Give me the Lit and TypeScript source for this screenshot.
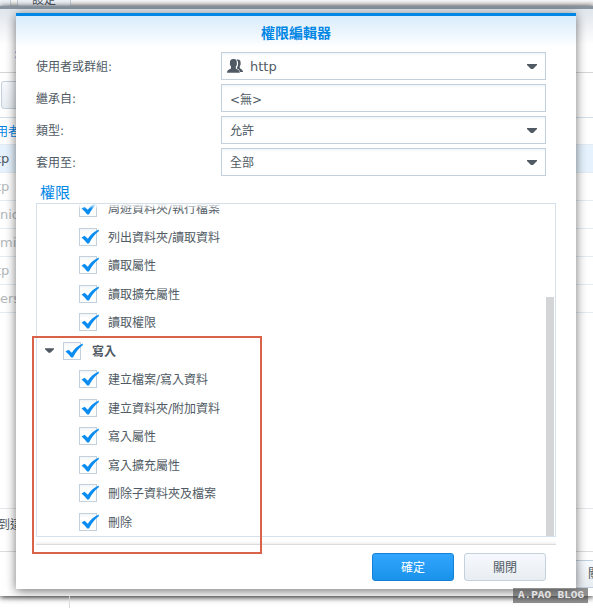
import { LitElement, html, css, svg, nothing } from "lit";
import { customElement, property } from "lit/decorators.js";

const FONT = css`"DejaVu Sans", "Noto Sans CJK TC", sans-serif`;

interface Permission {
  name: string;
  parent?: boolean;
}

const PERMISSIONS: Permission[] = [
  { name: "周遊資料夾/執行檔案" },
  { name: "列出資料夾/讀取資料" },
  { name: "讀取屬性" },
  { name: "讀取擴充屬性" },
  { name: "讀取權限" },
  { name: "寫入", parent: true },
  { name: "建立檔案/寫入資料" },
  { name: "建立資料夾/附加資料" },
  { name: "寫入屬性" },
  { name: "寫入擴充屬性" },
  { name: "刪除子資料夾及檔案" },
  { name: "刪除" },
];

const arrow = (cls: string) => html`<svg class=${cls} viewBox="0 0 10 5" aria-hidden="true">
  ${svg`<path d="M0 0H10V1L6 5H4L0 1Z" fill="#505a64"/>`}
</svg>`;

@customElement("permission-row")
class PermissionRow extends LitElement {
  @property() name = "";
  @property({ type: Boolean, reflect: true }) parent = false;

  static styles = css`
    :host { display: flex; align-items: center; padding-left: 42px; }
    :host([parent]) { padding-left: 8px; font-weight: bold; }
    .toggle { display: flex; width: 18px; height: 18px; padding: 0; border: 0; background: none; align-items: center; }
    .caret { width: 9px; height: 5px; }
    .item { display: flex; align-items: center; gap: 11px; }
    .box { display: grid; width: 18px; height: 18px; }
    .box > * { grid-area: 1 / 1; }
    .input { appearance: none; box-sizing: border-box; width: 18px; height: 18px; margin: 0; border: 1px solid #c3d0dd; background: linear-gradient(#f1f4f7, #fff 4px); }
    .tick { width: 18px; height: 18px; overflow: visible; pointer-events: none; }
    .name { line-height: 18px; padding-top: 2px; white-space: nowrap; }
  `;

  render() {
    return html`
      ${this.parent ? html`<button class="toggle" aria-label="收合">${arrow("caret")}</button>` : nothing}
      <label class="item">
        <span class="box">
          <input class="input" type="checkbox" checked />
          <svg class="tick" viewBox="0 0 18 18" aria-hidden="true">
            <path d="M2.5 9.4 5.6 7.8 8.8 10.8C11.6 6.8 15 3.4 19.8 1.6V3.2C16 6 13 9.8 10 15.4H8.2C6.4 13 4.6 11 2.5 9.4Z" fill="#0a8cf0" />
          </svg>
        </span>
        <span class="name">${this.name}</span>
      </label>
    `;
  }
}

@customElement("permission-dialog")
class PermissionDialog extends LitElement {
  static styles = css`
    :host { display: block; }
    .dialog { border-top: 3px solid #0086e5; background: #fff; box-shadow: 0 2px 10px rgba(0, 0, 0, 0.55); padding-bottom: 8px; }
    .head { height: 36px; background: linear-gradient(#d8ecfb, #fff 32px); display: flex; align-items: center; justify-content: center; }
    .title { margin: 0; font-size: 14px; line-height: 20px; padding-bottom: 2px; color: #0086e5; }
    .fields { display: grid; grid-template-columns: 185px 1fr; gap: 4px 0; padding: 0 30px 0 20px; align-items: center; }
    .label { padding-top: 2px; }
    .control { display: grid; height: 28px; box-sizing: border-box; border: 1px solid #c3d0dd; background: linear-gradient(#f1f4f7, #fff 3px); align-items: center; min-width: 0; }
    .control > * { grid-area: 1 / 1; }
    .entry { appearance: none; width: 100%; height: 26px; box-sizing: border-box; border: 0; margin: 0; background: none; padding: 0 28px 0 8px; font: inherit; color: inherit; }
    .select { padding-top: 2px; }
    .with-icon { padding-left: 28px; font-size: 13px; }
    .drop { width: 10px; height: 5px; justify-self: end; margin-right: 8px; pointer-events: none; }
    .user { width: 16px; height: 16px; margin-left: 5px; pointer-events: none; }
    .section { margin: 7px 0 0; padding-left: 24px; font-size: 15px; font-weight: normal; line-height: 20px; color: #0086e5; }
    .list-wrap { position: relative; margin: 0 20px; }
    .list { display: flex; height: 332px; border: 1px solid #d4e0eb; overflow: hidden; position: relative; }
    .list::before { content: ""; position: absolute; inset: 0 0 auto; height: 5px; background: linear-gradient(#fff, rgba(255, 255, 255, 0)); }
    .rows { display: grid; grid-auto-rows: 1fr; height: 342px; flex: 1; align-self: flex-end; }
    .thumb { width: 8px; margin: 93px 1px 0 0; background: #d4d5d6; }
    .mark { position: absolute; left: -4px; bottom: -17px; width: 226px; height: 214px; border: 2px solid #d96248; pointer-events: none; }
    .rule { height: 3px; margin: 4px 20px 8px; border-bottom: 1px solid #d9dbdc; background: linear-gradient(#fff, #f0f0f0); }
    .actions { display: flex; justify-content: flex-end; gap: 10px; padding-right: 30px; }
    .button { width: 82px; height: 28px; padding: 2px 0 0; border: 1px solid #c3d0dd; border-radius: 3px; background: linear-gradient(#f6faff, #e8edf2); font: inherit; color: inherit; }
    .primary { border-color: #1481d8; background: linear-gradient(#33a6ff, #1a92ea); color: #fff; }
  `;

  render() {
    return html`
      <section class="dialog" role="dialog" aria-labelledby="title">
        <header class="head"><h1 class="title" id="title">權限編輯器</h1></header>
        <div class="fields">
          <label class="label" for="user">使用者或群組:</label>
          <div class="control">
            <svg class="user" viewBox="0 0 16 16" aria-hidden="true">
              <path d="M9.5 1.8C12.2.8 14 2.6 13.6 5.2 14 6.3 13.4 7.3 12.8 8.2V10C13.4 11 15.8 11.3 16 14H13C12.4 11.8 11.2 11 10 10.5V9.4C11.6 7.2 11.6 3.4 9.5 1.8Z" fill="#505a64" />
              <path d="M6.2 1C9 .6 10.2 2.4 9.8 5 10.4 6.4 9.4 7.6 8.8 8.6V10.2C9.6 11.4 12.6 11.4 12.8 14.8H0C0 11.4 3.2 11.4 4 10.2V8.6C3.4 7.6 2.4 6.4 3 5 2.6 2.4 4 1.2 6.2 1Z" fill="#505a64" />
            </svg>
            <select class="entry select with-icon" id="user"><option>http</option></select>
            ${arrow("drop")}
          </div>
          <label class="label" for="inherit">繼承自:</label>
          <div class="control"><input class="entry" id="inherit" value="<無>" readonly /></div>
          <label class="label" for="type">類型:</label>
          <div class="control"><select class="entry select" id="type"><option>允許</option></select>${arrow("drop")}</div>
          <label class="label" for="apply">套用至:</label>
          <div class="control"><select class="entry select" id="apply"><option>全部</option></select>${arrow("drop")}</div>
        </div>
        <h2 class="section">權限</h2>
        <div class="list-wrap">
          <div class="list">
            <div class="rows">
              ${PERMISSIONS.map((p) => html`<permission-row .name=${p.name} ?parent=${p.parent}></permission-row>`)}
            </div>
            <div class="thumb"></div>
          </div>
          <div class="mark"></div>
        </div>
        <div class="rule"></div>
        <footer class="actions">
          <button class="button primary">確定</button>
          <button class="button">關閉</button>
        </footer>
      </section>
    `;
  }
}

@customElement("app-root")
class AppRoot extends LitElement {
  static styles = css`
    :host { display: grid; min-height: 100vh; font: 12px/18px ${FONT}; color: #505a64; overflow: hidden; }
    .page { grid-area: 1 / 1; display: flex; flex-direction: column; min-width: 0; }
    .front { grid-area: 1 / 1; margin: 13px 17px 19px 16px; min-width: 0; z-index: 1; }
    .tabs { display: flex; gap: 6px; height: 6px; overflow: hidden; background: linear-gradient(#fafafa, #dcdcdc); align-items: flex-end; }
    .tab { box-sizing: border-box; width: 54px; height: 28px; margin-bottom: -8px; padding: 0; border: 0 solid #c3d0dd; border-width: 0 1px; background: linear-gradient(#f6faff, #e8edf2); font: inherit; color: inherit; flex: none; }
    .tab.cut { width: 11px; border-left: 0; }
    .window { flex: 1; display: flex; flex-direction: column; border-top: 3px solid #8794a0; background: linear-gradient(#e0e6ed, #fff 36px); box-shadow: 0 1px 6px rgba(0, 0, 0, 0.9); }
    .caption { box-sizing: border-box; height: 64px; padding: 36px 0 0 14px; border-bottom: 1px solid #d4d6d8; color: #0086e5; }
    .tools { height: 44px; display: flex; align-items: center; padding-left: 1px; }
    .tool { width: 60px; height: 28px; border: 1px solid #c3d0dd; border-radius: 3px; background: linear-gradient(#f6faff, #e8edf2); }
    .grid { width: 100%; border-collapse: collapse; border-top: 1px solid #d4e0eb; font-size: 13px; color: #b4b8bc; text-indent: -4px; }
    .grid th, .grid td { box-sizing: border-box; height: 28px; padding: 0; border-bottom: 1px solid #e4ebf2; text-align: left; font-weight: normal; }
    .grid th { height: 27px; padding-top: 2px; font-size: 12px; color: #0086e5; }
    .grid .on { background: #e6f3fe; color: #505a64; }
    .grid .flush { text-indent: 0; }
    .space { flex: 1; }
    .status { box-sizing: border-box; height: 43px; border-top: 1px solid #e4e8ec; padding-top: 7px; text-indent: -2px; }
    .foot { box-sizing: border-box; height: 45px; border-top: 1px solid #d9dbdc; display: flex; justify-content: flex-end; padding-top: 8px; }
    .close { box-sizing: border-box; width: 24px; height: 28px; padding: 0 0 0 18px; border: 1px solid #c3d0dd; border-right: 0; background: linear-gradient(#f6faff, #e8edf2); font: inherit; color: inherit; overflow: hidden; text-align: left; }
    .below { height: 12px; display: flex; }
    .below-side { width: 69px; border-right: 1px solid #dcdcdc; }
    .stamp { grid-area: 1 / 1; align-self: end; justify-self: end; z-index: 2; margin: 0 5px 5px 0; padding: 0 4px 0 5px; height: 15px; background: rgba(70, 70, 70, 0.6); color: #e4e4e4; font: bold 11px/15px "Liberation Mono", monospace; }
  `;

  render() {
    const rows = ["tp", "tp", "nic", "min", "tp", "ers"];
    return html`
      <div class="page">
        <div class="tabs"><button class="tab cut" aria-label="分頁"></button><button class="tab">設定</button></div>
        <main class="window">
          <div class="caption">:</div>
          <div class="tools"><button class="tool" aria-label="工具"></button></div>
          <table class="grid">
            <thead><tr><th>用者</th></tr></thead>
            <tbody>${rows.map((r, i) => html`<tr><td class=${i === 0 ? "on" : r === "tp" ? "" : "flush"}>${r}</td></tr>`)}</tbody>
          </table>
          <div class="space"></div>
          <div class="status">到這</div>
          <div class="foot"><button class="close">關</button></div>
        </main>
        <div class="below"><div class="below-side"></div></div>
      </div>
      <permission-dialog class="front"></permission-dialog>
      <div class="stamp">A.PAO BLOG</div>
    `;
  }
}
